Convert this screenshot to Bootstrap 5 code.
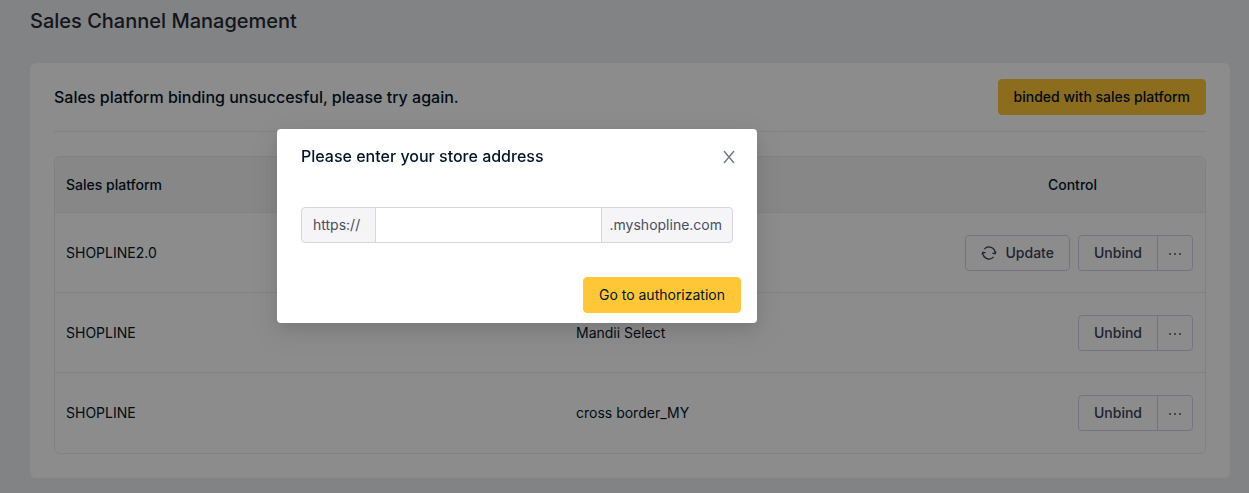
<!DOCTYPE html>
<html lang="en">
<head>
<meta charset="utf-8">
<meta name="viewport" content="width=device-width, initial-scale=1">
<title>Sales Channel Management</title>
<link href="https://cdn.jsdelivr.net/npm/bootstrap@5.3.0/dist/css/bootstrap.min.css" rel="stylesheet">
<style>
  body { font-family: Inter, "Liberation Sans", sans-serif; font-size: 14px; line-height: 20px; color: #001529; background: #edeef2; }
  .page { padding: 6px 19px 15px 30px; }
  .page-title { font-size: 20px; line-height: 30px; font-weight: 500; color: #242833; margin: 0 0 27px; }
  .panel { background: #fff; border-radius: 6px; padding: 16px 24px 24px; }
  .panel-head { border-bottom: 1px solid #ebebf1; padding-bottom: 16px; margin-bottom: 24px; }
  .heading { font-size: 16px; line-height: 24px; font-weight: 500; margin: 0; }
  .btn { font-size: 14px; line-height: 20px; font-weight: 500; padding: 7px 15px; border-radius: 4px; }
  .btn-brand { --bs-btn-bg: #ffc635; --bs-btn-border-color: #ffc635; --bs-btn-color: #001529; --bs-btn-hover-bg: #ffd05a; --bs-btn-hover-border-color: #ffd05a; --bs-btn-hover-color: #001529; }
  .btn-line { --bs-btn-bg: #fff; --bs-btn-border-color: #d3d3e6; --bs-btn-color: #3a4354; --bs-btn-hover-bg: #f5f5f8; --bs-btn-hover-border-color: #d3d3e6; }
  .btn-dots { padding: 7px 10px; }
  .btn-dots svg { color: #7a8190; }
  .table-frame { border: 1px solid #ebebf1; border-radius: 6px; overflow: hidden; }
  .channels { margin: 0; table-layout: fixed; border-collapse: separate; border-spacing: 0; color: inherit; }
  .channels th, .channels td { padding: 1px 12px 0 11px; height: 80px; color: #001529; vertical-align: middle; border-bottom: 1px solid #ebebf1; }
  .channels th { height: 56px; font-weight: 500; background: #f6f6f7; }
  .channels tr:last-child td { border-bottom: 0; padding-top: 0; }
  .col-platform { width: 510px; }
  .col-control { width: 264px; }
  .veil { background: rgba(0, 0, 0, .45); padding-right: 215px; }
  .store-dialog { --bs-modal-width: 480px; margin-top: 129px; }
  .store-dialog .modal-content { border: 0; border-radius: 4px; color: #001529; box-shadow: 0 6px 16px rgba(0, 0, 0, .1), 0 9px 32px 8px rgba(0, 0, 0, .06); }
  .store-dialog .modal-header { border: 0; padding: 15px 16px 0 24px; }
  .store-dialog .modal-body { padding: 39px 24px 0; }
  .store-dialog .modal-footer { border: 0; padding: 34px 16px 10px; }
  .store-dialog .modal-footer > * { margin: 0; }
  .btn-shut { background: none; border: 0; padding: 5px 4px 3px; color: #6b7488; }
  .store-url > * { font-size: 14px; line-height: 20px; border-color: #d2d6e6; padding: 7px 11px; border-radius: 4px; }
  .store-url .input-group-text { background: #f5f5f8; color: #474f5e; }
  .store-url .url-scheme { min-width: 75px; }
  .store-url .url-domain { padding: 7px 10px 7px 8px; }
</style>
</head>
<body>
<main class="page">
  <h1 class="page-title">Sales Channel Management</h1>
  <section class="panel">
    <div class="panel-head d-flex justify-content-between align-items-center">
      <h2 class="heading">Sales platform binding unsuccesful, please try again.</h2>
      <button type="button" class="btn btn-brand">binded with sales platform</button>
    </div>
    <div class="table-frame">
      <table class="table channels">
        <colgroup><col class="col-platform"><col><col class="col-control"></colgroup>
        <thead>
          <tr><th scope="col">Sales platform</th><th scope="col"></th><th scope="col" class="text-center">Control</th></tr>
        </thead>
        <tbody>
          <tr>
            <td>SHOPLINE2.0</td><td></td>
            <td>
              <div class="d-flex justify-content-end gap-2">
                <button type="button" class="btn btn-line d-flex align-items-center gap-2">
                  <svg width="16" height="16" viewBox="0 0 16 16" fill="none" stroke="currentColor" stroke-width="1.2" aria-hidden="true"><path d="M3.4 4.100A6 6 0 0 1 14 8.200M12.600 11.900A6 6 0 0 1 2 7.800M11.400 8.200l2.700.6 1-2.300M4.600 7.800l-2.700-.6-1 2.300"/></svg>
                  Update</button>
                <div class="btn-group">
                  <button type="button" class="btn btn-line">Unbind</button>
                  <button type="button" class="btn btn-line btn-dots" aria-label="More"><svg width="14" height="14" viewBox="0 0 14 14" fill="currentColor" aria-hidden="true"><path d="M1 6h2v2H1zM6 6h2v2H6zM11 6h2v2h-2z"/></svg></button>
                </div>
              </div>
            </td>
          </tr>
          <tr>
            <td>SHOPLINE</td><td>Mandii Select</td>
            <td>
              <div class="d-flex justify-content-end">
                <div class="btn-group">
                  <button type="button" class="btn btn-line">Unbind</button>
                  <button type="button" class="btn btn-line btn-dots" aria-label="More"><svg width="14" height="14" viewBox="0 0 14 14" fill="currentColor" aria-hidden="true"><path d="M1 6h2v2H1zM6 6h2v2H6zM11 6h2v2h-2z"/></svg></button>
                </div>
              </div>
            </td>
          </tr>
          <tr>
            <td>SHOPLINE</td><td>cross border_MY</td>
            <td>
              <div class="d-flex justify-content-end">
                <div class="btn-group">
                  <button type="button" class="btn btn-line">Unbind</button>
                  <button type="button" class="btn btn-line btn-dots" aria-label="More"><svg width="14" height="14" viewBox="0 0 14 14" fill="currentColor" aria-hidden="true"><path d="M1 6h2v2H1zM6 6h2v2H6zM11 6h2v2h-2z"/></svg></button>
                </div>
              </div>
            </td>
          </tr>
        </tbody>
      </table>
    </div>
  </section>
</main>

<div class="modal d-block veil" role="dialog" aria-modal="true" aria-labelledby="store-title">
  <div class="modal-dialog store-dialog">
    <form class="modal-content">
      <div class="modal-header">
        <label class="heading" id="store-title" for="store-name">Please enter your store address</label>
        <button type="button" class="btn-shut d-flex" aria-label="Close"><svg width="16" height="16" viewBox="0 0 16 16" fill="none" stroke="currentColor" stroke-width="1.3" aria-hidden="true"><path d="M3 2l10 12M13 2L3 14"/></svg></button>
      </div>
      <div class="modal-body">
        <div class="input-group store-url">
          <span class="input-group-text url-scheme">https://</span>
          <input type="text" class="form-control" id="store-name">
          <span class="input-group-text url-domain">.myshopline.com</span>
        </div>
      </div>
      <div class="modal-footer">
        <button type="submit" class="btn btn-brand fw-normal">Go to authorization</button>
      </div>
    </form>
  </div>
</div>
<script src="https://cdn.jsdelivr.net/npm/bootstrap@5.3.0/dist/js/bootstrap.bundle.min.js"></script>
</body>
</html>
